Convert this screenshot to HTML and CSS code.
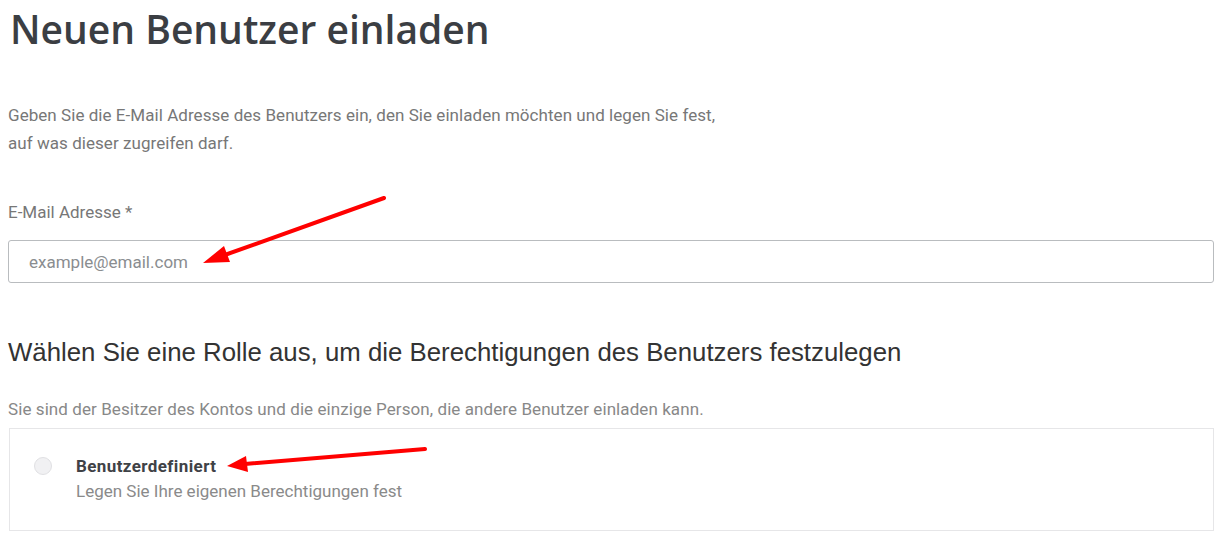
FILE: index.html
```html
<!DOCTYPE html>
<html lang="de">
<head>
<meta charset="utf-8">
<title>Neuen Benutzer einladen</title>
<link rel="stylesheet" href="styles.css">
</head>
<body>
<main class="page">
  <h1 class="title">Neuen Benutzer einladen</h1>
  <p class="intro">Geben Sie die E-Mail Adresse des Benutzers ein, den Sie einladen möchten und legen Sie fest,<br>auf was dieser zugreifen darf.</p>
  <label class="label" for="email">E-Mail Adresse *</label>
  <input class="input" id="email" type="text" placeholder="example@email.com">
  <h2 class="subtitle">Wählen Sie eine Rolle aus, um die Berechtigungen des Benutzers festzulegen</h2>
  <p class="note">Sie sind der Besitzer des Kontos und die einzige Person, die andere Benutzer einladen kann.</p>
  <div class="card">
    <span class="radio"></span>
    <div class="role">
      <div class="role-name">Benutzerdefiniert</div>
      <div class="role-desc">Legen Sie Ihre eigenen Berechtigungen fest</div>
    </div>
  </div>
</main>
<svg class="arrows" width="1224" height="543" viewBox="0 0 1224 543">
  <line x1="384" y1="198" x2="222" y2="256" stroke="#f00" stroke-width="4" stroke-linecap="round"/>
  <polygon points="203,263 224,246 230,262" fill="#f00"/>
  <line x1="425" y1="449" x2="245" y2="464" stroke="#f00" stroke-width="4" stroke-linecap="round"/>
  <polygon points="227,466 246,456 248,472" fill="#f00"/>
</svg>
</body>
</html>
```
FILE: styles.css
```css
html, body {
  margin: 0;
  padding: 0;
  background: #fff;
}
body {
  position: relative;
  font-family: Roboto, "Liberation Sans", sans-serif;
}
.page {
  padding: 0 10px 0 8px;
  display: flex;
  flex-direction: column;
}
.title {
  margin: 4px 0 0 2px;
  font-family: "Open Sans", sans-serif;
  font-weight: 600;
  font-size: 39px;
  line-height: 50px;
  color: #3b3e43;
}
.intro {
  margin: 47px 0 0 0;
  font-size: 17px;
  line-height: 28px;
  color: #777;
  letter-spacing: 0.05px;
}
.label {
  margin-top: 45px;
  font-size: 17px;
  line-height: 20px;
  color: #777;
}
.input {
  margin-top: 18px;
  box-sizing: border-box;
  width: 1206px;
  height: 43px;
  border: 1px solid #b9bcbf;
  border-radius: 3px;
  padding: 0 20px;
  font-family: Roboto, sans-serif;
  font-size: 17px;
  color: #333;
  outline: none;
}
.input::placeholder {
  color: #8a8d90;
}
.subtitle {
  margin: 54px 0 0 0;
  font-family: "Liberation Sans", Arial, sans-serif;
  font-weight: 400;
  font-size: 25.8px;
  line-height: 30px;
  color: #333;
}
.note {
  margin: 32px 0 0 0;
  font-size: 17px;
  line-height: 20px;
  color: #888;
  letter-spacing: 0.08px;
}
.card {
  margin: 9px 0 0 1px;
  box-sizing: border-box;
  width: 1205px;
  height: 103px;
  border: 1px solid #e6e6e8;
  display: flex;
  align-items: flex-start;
  padding: 27px 24px;
  gap: 24px;
}
.radio {
  margin-top: 1px;
  width: 18px;
  height: 18px;
  border-radius: 50%;
  background: #f1f1f3;
  border: 1px solid #e0e0e3;
  box-sizing: border-box;
  flex: none;
}
.role-name {
  font-weight: 700;
  font-size: 17px;
  line-height: 20px;
  color: #3f4246;
  letter-spacing: 0.4px;
}
.role-desc {
  margin-top: 5px;
  font-size: 17px;
  line-height: 20px;
  color: #8a8a8a;
}
.arrows {
  position: absolute;
  left: 0;
  top: 0;
  pointer-events: none;
}
```
